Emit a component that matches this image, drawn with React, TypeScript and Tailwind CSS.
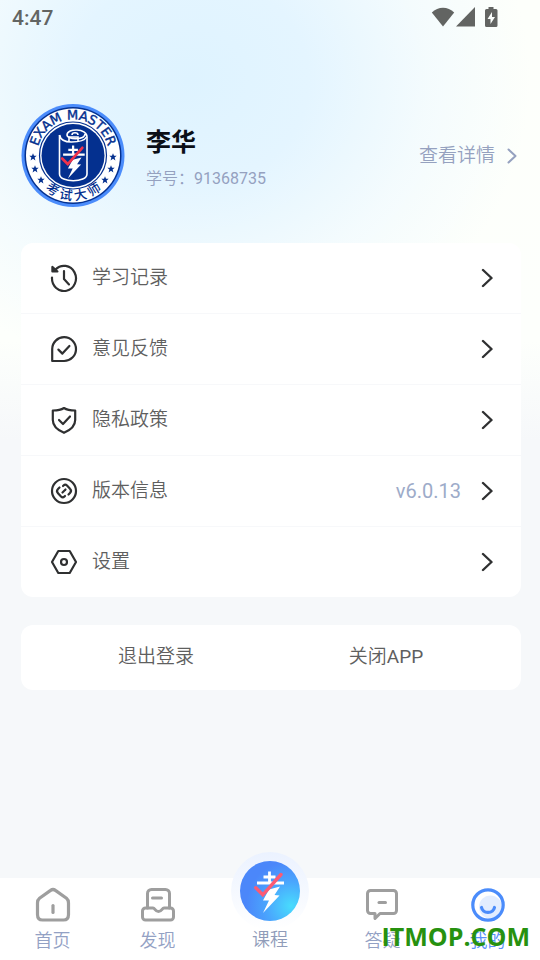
import type { ReactNode } from "react";
import { clsx } from "clsx";

interface MenuItem {
  label: string;
  icon: ReactNode;
  value?: string;
}

const stroke = {
  fill: "none",
  stroke: "currentColor",
  strokeLinecap: "round",
  strokeLinejoin: "round",
} as const;

function HistoryIcon() {
  return (
    <svg viewBox="0 0 28 28" className="size-7" strokeWidth="2.2" {...stroke}>
      <path d="M2 13.6A12 12.6 0 1 0 5.500 5.500" />
      <path d="M2.300 2.800v4.700h5.200Z" fill="currentColor" strokeWidth="2" />
      <path d="M14 7v8l5 5.4" />
    </svg>
  );
}

function FeedbackIcon() {
  return (
    <svg viewBox="0 0 28 28" className="size-7" strokeWidth="2.2" {...stroke}>
      <path d="M2.2 26V14A11.9 11.9 0 1 1 14 26Z" />
      <path d="m8.4 14.6 4 4 7-7.6" />
    </svg>
  );
}

function ShieldIcon() {
  return (
    <svg viewBox="0 0 28 28" className="size-7" strokeWidth="2.2" {...stroke}>
      <path d="M14 2c3 2 7 2.500 11.200 2.500V14c0 6-5.600 10.400-11.200 12.800C8.400 24.400 2.800 20 2.800 14V4.500C7 4.500 11 4 14 2Z" />
      <path d="m9 14 4 4 7-7.500" />
    </svg>
  );
}

function VersionIcon() {
  return (
    <svg viewBox="0 0 28 28" className="size-7" strokeWidth="2.2" {...stroke}>
      <circle cx="14" cy="14" r="12" />
      <path d="M9.500 10.500 8 12a3 3 0 0 0 0 4.200l3 3.300a2.500 2.500 0 0 0 3.500 0l.5-.5" />
      <path d="m13 9 .5-.5a2.500 2.500 0 0 1 3.500 0l3 3.300a3 3 0 0 1 0 4.200l-1.500 1.500" />
      <path d="m12.500 15.500 3-3" />
    </svg>
  );
}

function SettingsIcon() {
  return (
    <svg viewBox="0 0 28 28" className="size-7" strokeWidth="2.2" {...stroke}>
      <path d="M8.300 3h11.400L26 14l-6.300 11H8.300L2 14Z" />
      <circle cx="14" cy="14" r="3" />
    </svg>
  );
}

function Chevron({ className }: { className?: string }) {
  return (
    <svg viewBox="0 0 12 20" className={clsx("h-5 w-3 shrink-0", className)} strokeWidth="2.4" {...stroke}>
      <path d="m2 2 8.500 8L2 18" />
    </svg>
  );
}

function ExamMark({ check }: { check: string }) {
  return (
    <g>
      <path d="M29.500 10.500V22M23.500 16h12M17 22h27" stroke="#fff" strokeWidth="2.800" fill="none" />
      <path d="M29 28.500 40 25.500l-5.500 8.500 5 .5L23 52l6-12.500h-6Z" fill="#fff" />
      <path d="m15.800 26.800 7 7L41 13.500" stroke={check} strokeWidth="3.400" strokeLinecap="round" fill="none" />
    </g>
  );
}

const star = "M0-3.800 1-1.200 3.700-1.200 1.600.600 2.400 3.400 0 1.800-2.400 3.400-1.600.600-3.700-1.200-1-1.200Z";

function Avatar() {
  return (
    <svg viewBox="0 0 104 104" className="size-[104px] shrink-0" role="img" aria-label="EXAM MASTER">
      <defs>
        <path id="badge-arc" d="M16 51.500a36 36 0 1 1 72 0" />
      </defs>
      <circle cx="52" cy="51.500" r="51.500" fill="#4b8cfb" />
      <circle cx="52" cy="51.500" r="48.500" fill="#04308f" />
      <circle cx="52" cy="51.500" r="47" fill="#fff" />
      <circle cx="52" cy="51.500" r="33.500" fill="none" stroke="#04308f" strokeWidth="1.200" />
      <circle cx="52" cy="51.500" r="31.500" fill="#04308f" />
      <text
        fill="#04308f"
        stroke="#04308f"
        strokeWidth=".4"
        textAnchor="middle"
        className="font-['DejaVu_Sans'] text-[13px]"
      >
        <textPath href="#badge-arc" startOffset="50%">EXAM MASTER</textPath>
      </text>
      <g fill="#04308f" textAnchor="middle" className="font-['Noto_Sans_CJK_SC',sans-serif] text-[13px] font-medium">
        <text x="52" y="96" transform="rotate(31 52 51.500)">考</text>
        <text x="52" y="96" transform="rotate(10 52 51.500)">试</text>
        <text x="52" y="96" transform="rotate(-11 52 51.500)">大</text>
        <text x="52" y="96" transform="rotate(-32 52 51.500)">师</text>
      </g>
      <g fill="#04308f">
        <path d={star} transform="translate(12 53)" />
        <path d={star} transform="translate(14 65)" />
        <path d={star} transform="translate(20 76)" />
        <path d={star} transform="translate(92 53)" />
        <path d={star} transform="translate(90 65)" />
        <path d={star} transform="translate(84 76)" />
      </g>
      <g fill="none" stroke="#fff" strokeWidth="1.600">
        <path d="M38.500 31v39c0 9 27.500 9 27.500 0V33c0-9-20-9-20-2 0 5 18 5 18-1" />
        <path d="M38.500 31c1 5 5 7 12 7s13-1 15-5M48 37v-4h9v4M51 31c0-3 6-3 6 0" />
      </g>
      <g transform="translate(28.500 33) scale(.8)">
        <ExamMark check="#f0334b" />
      </g>
    </svg>
  );
}

function HomeIcon() {
  return (
    <svg viewBox="0 0 36 36" className="size-9" strokeWidth="3.200" {...stroke}>
      <path d="M15.600 3.400 4.500 11.300C3 12.500 2.500 14 2.500 16v11.500c0 3.500 1.500 5.500 5 5.500h21c3.500 0 5-2 5-5.500V16c0-2-.5-3.500-2-4.700L20.400 3.400a4 4 0 0 0-4.800 0Z" />
      <path d="M18 18.500v7" />
    </svg>
  );
}

function DiscoverIcon() {
  return (
    <svg viewBox="0 0 36 36" className="size-9" strokeWidth="3" {...stroke}>
      <path d="M7.500 21V6.500a4 4 0 0 1 4-4h14a4 4 0 0 1 4 4V21" />
      <path d="M12.500 11h9" />
      <path d="M5.500 21H13c2 0 2 3.500 5.500 3.500S22 21 24 21h6.500a3 3 0 0 1 3 3v6a3 3 0 0 1-3 3h-25a3 3 0 0 1-3-3v-6a3 3 0 0 1 3-3Z" />
    </svg>
  );
}

function QuestionIcon() {
  return (
    <svg viewBox="0 0 36 36" className="size-9" strokeWidth="3" {...stroke}>
      <path d="M5.500 3.500h23a3 3 0 0 1 3 3v17a3 3 0 0 1-3 3H15l-5 5v-5H5.500a3 3 0 0 1-3-3v-17a3 3 0 0 1 3-3Z" />
      <path d="M14 15.500h6.500" />
    </svg>
  );
}

function MineIcon() {
  return (
    <svg viewBox="0 0 36 36" className="size-9" strokeWidth="3.200" {...stroke}>
      <circle cx="20.500" cy="20" r="11.500" fill="#e3edff" stroke="none" />
      <circle cx="18" cy="18" r="15.200" />
      <path d="M11.500 20.500c1.500 6.500 11.500 6.500 13 0" />
    </svg>
  );
}

function CourseIcon() {
  return (
    <svg viewBox="0 0 60 60" className="size-[60px]">
      <defs>
        <radialGradient id="course-fill" cx=".85" cy=".75" r=".75">
          <stop offset="0" stopColor="#48dcfd" />
          <stop offset=".55" stopColor="#4aa5fd" />
          <stop offset="1" stopColor="#4b87fa" />
        </radialGradient>
      </defs>
      <circle cx="30" cy="30" r="30" fill="url(#course-fill)" />
      <ExamMark check="#fc5b74" />
    </svg>
  );
}

const menuItems: MenuItem[] = [
  { label: "学习记录", icon: <HistoryIcon /> },
  { label: "意见反馈", icon: <FeedbackIcon /> },
  { label: "隐私政策", icon: <ShieldIcon /> },
  { label: "版本信息", icon: <VersionIcon />, value: "v6.0.13" },
  { label: "设置", icon: <SettingsIcon /> },
];

function StatusBar() {
  return (
    <div className="flex h-9 items-center justify-between pr-[42px] pb-0.5 pl-3 text-[#626462]">
      <span className="pt-0.5 text-[21px] leading-6 font-medium">4:47</span>
      <div className="flex items-center">
        <svg viewBox="0 0 24 20" className="h-5 w-6" fill="currentColor">
          <path d="M12 19.500.8 5.500C7-.8 17-.8 23.200 5.500Z" />
        </svg>
        <svg viewBox="0 0 20 20" className="ml-px h-5 w-5" fill="currentColor">
          <path d="M0 19.500h19V0Z" />
        </svg>
        <svg viewBox="0 0 14 20" className="ml-2 h-5 w-3.5" fill="currentColor">
          <path
            fillRule="evenodd"
            d="M4.500 0h5v2H12a1.500 1.500 0 0 1 1.500 1.500v15A1.500 1.500 0 0 1 12 20H2.500A1.500 1.500 0 0 1 1 18.500v-15A1.500 1.500 0 0 1 2.500 2h2ZM8 5l-4.500 7h3v5L11 10H8Z"
          />
        </svg>
      </div>
    </div>
  );
}

function ProfileHeader() {
  return (
    <header className="flex items-center px-[21px] pt-[68px]">
      <Avatar />
      <div className="ml-[21px] flex-1 pt-1.5">
        <h1 className="text-[25px] leading-8 font-bold text-[#0b0f17]">李华</h1>
        <p className="mt-2 text-base leading-6 font-[350] text-[#95a1bf]">
          学号：<span className="font-normal">91368735</span>
        </p>
      </div>
      <button className="flex items-center gap-3 text-[19px] leading-7 font-[350] text-[#95a1bf]">
        查看详情
        <svg viewBox="0 0 10 16" className="mr-0.5 h-4 w-2.5" strokeWidth="2" {...stroke}>
          <path d="m1.500 1.500 7 6.500-7 6.500" />
        </svg>
      </button>
    </header>
  );
}

function TabButton({ label, icon, active }: { label: string; icon: ReactNode; active?: boolean }) {
  return (
    <button className="flex flex-col items-center pt-[9px]">
      <span className={active ? "text-[#4b8cfb]" : "text-[#9e9e9e]"}>{icon}</span>
      <span className={clsx("mt-1.5 text-[18px] leading-6 font-[350]", active ? "text-[#5a90fa]" : "text-[#93a1c4]")}>
        {label}
      </span>
    </button>
  );
}

function TabBar() {
  return (
    <nav className="relative grid h-[82px] grid-cols-[7fr_7fr_8fr_7fr_7fr] items-start bg-white">
      <TabButton label="首页" icon={<HomeIcon />} />
      <TabButton label="发现" icon={<DiscoverIcon />} />
      <button className="-mt-[26px] flex flex-col items-center">
        <span className="flex size-[78px] items-center justify-center rounded-full bg-linear-to-b from-[#ebf2ff] to-white">
          <CourseIcon />
        </span>
        <span className="-mt-0.5 text-[18px] leading-6 font-[350] text-[#909cb9]">课程</span>
      </button>
      <TabButton label="答疑" icon={<QuestionIcon />} />
      <TabButton label="我的" icon={<MineIcon />} active />
      {/* site watermark over the tab labels */}
      <span className="pointer-events-none absolute right-2.5 bottom-2 font-['Open_Sans',sans-serif] text-[25px] leading-8 font-bold text-[#27910f]">
        ITMOP.COM
      </span>
    </nav>
  );
}

export default function App() {
  return (
    <div className="flex min-h-screen flex-col bg-[#f6f8fa] bg-[radial-gradient(ellipse_340px_300px_at_190px_80px,#def3ff_0%,#e4f5ff_35%,rgba(238,249,255,0.6)_70%,rgba(248,253,255,0)_100%),linear-gradient(to_bottom,#fdfffb_0px,#fdfffc_340px,#f6f8fa_440px)] font-['Roboto','Noto_Sans_CJK_SC',sans-serif]">
      <StatusBar />
      <ProfileHeader />

      <main className="flex flex-1 flex-col gap-7 pt-[35px] pr-[19px] pb-7 pl-[21px]">
        <ul className="divide-y divide-[#f7f8fa] overflow-hidden rounded-xl bg-white">
          {menuItems.map((item) => (
            <li key={item.label}>
              <button className="flex h-[70px] w-full items-center pr-7 pl-[29px] text-[19px] font-[350] text-[#5f5f5f]">
                <span className="text-[#2f3031]">{item.icon}</span>
                <span className="ml-3.5 flex-1 text-left">{item.label}</span>
                {item.value && <span className="mr-5 text-[20px] font-normal text-[#9dabc9]">{item.value}</span>}
                <Chevron className="text-[#2f3031]" />
              </button>
            </li>
          ))}
        </ul>

        <div className="grid grid-cols-2 rounded-xl bg-white px-5 text-[19px] font-[350] text-[#5f5f5f]">
          <button className="h-[65px]">退出登录</button>
          <button className="h-[65px]">
            关闭<span className="font-normal">APP</span>
          </button>
        </div>
      </main>

      <TabBar />
    </div>
  );
}
